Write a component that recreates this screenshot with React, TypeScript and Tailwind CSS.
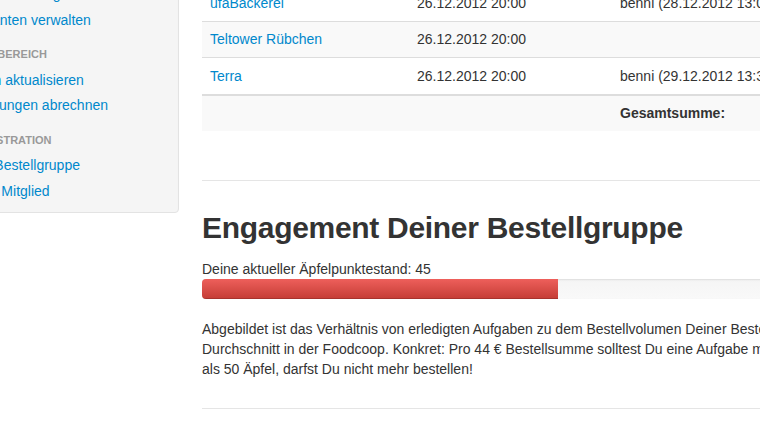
import React from "react";

const font = { fontFamily: "'Liberation Sans', Arial, Helvetica, sans-serif" };

function NavItem({ children }: { children: React.ReactNode }) {
  return (
    <li className="h-[25.5px] leading-[25.5px] whitespace-nowrap text-[14px] text-[#0088cc]">
      {children}
    </li>
  );
}

function NavHeader({ children }: { children: React.ReactNode }) {
  return (
    <li className="mt-[9px] h-[25.5px] leading-[25.5px] whitespace-nowrap text-[11px] font-bold uppercase text-[#999999]">
      {children}
    </li>
  );
}

export default function App() {
  return (
    <div
      className="w-[760px] h-[428px] overflow-hidden bg-white text-[#333333]"
      style={font}
    >
      <div className="flex items-start mt-[-28px]">
        {/* Sidebar well */}
        <div className="shrink-0 w-[260px] ml-[-81px] bg-[#f5f5f5] border border-[#e3e3e3] rounded-[4px] shadow-[inset_0_1px_1px_rgba(0,0,0,0.05)] pt-[9px] pb-[8px] pl-[37px]">
          <ul className="flex flex-col">
            <NavItem>Lagerverwaltung</NavItem>
            <NavItem>Lieferanten verwalten</NavItem>
            <NavHeader>Finanzbereich</NavHeader>
            <NavItem>Konten aktualisieren</NavItem>
            <NavItem>Bestellungen abrechnen</NavItem>
            <NavHeader>Administration</NavHeader>
            <NavItem>Neue Bestellgruppe</NavItem>
            <NavItem>Neues Mitglied</NavItem>
          </ul>
        </div>

        {/* Main content */}
        <div className="shrink-0 w-[720px] ml-[23px] mt-[13px] text-[14px]">
          {/* Table */}
          <div className="flex flex-col">
            <div className="flex h-[36px] border-t border-[#dddddd] bg-white items-center">
              <div className="w-[207px] pl-2 text-[#0088cc] whitespace-nowrap">ufaBäckerei</div>
              <div className="w-[203px] pl-2 whitespace-nowrap">26.12.2012 20:00</div>
              <div className="pl-2 whitespace-nowrap">benni (28.12.2012 13:05)</div>
            </div>
            <div className="flex h-[36px] border-t border-[#dddddd] bg-[#f9f9f9] items-center">
              <div className="w-[207px] pl-2 text-[#0088cc] whitespace-nowrap">Teltower Rübchen</div>
              <div className="w-[203px] pl-2 whitespace-nowrap">26.12.2012 20:00</div>
              <div className="pl-2 whitespace-nowrap"></div>
            </div>
            <div className="flex h-[37px] border-t border-[#dddddd] bg-white items-center">
              <div className="w-[207px] pl-2 text-[#0088cc] whitespace-nowrap">Terra</div>
              <div className="w-[203px] pl-2 whitespace-nowrap">26.12.2012 20:00</div>
              <div className="pl-2 whitespace-nowrap">benni (29.12.2012 13:32)</div>
            </div>
            <div className="flex h-[37px] border-t-2 border-[#dddddd] bg-[#f9f9f9] items-center">
              <div className="w-[207px] pl-2"></div>
              <div className="w-[203px] pl-2"></div>
              <div className="pl-2 font-bold whitespace-nowrap">Gesamtsumme:</div>
            </div>
          </div>

          <hr className="mt-[49px] border-0 border-t border-[#e5e5e5] border-b border-b-white" />

          <h2 className="mt-[26px] h-[40px] leading-[40px] text-[30px] font-bold tracking-[-0.3px] text-[#333333] whitespace-nowrap">
            Engagement Deiner Bestellgruppe
          </h2>

          <div className="mt-[11px] leading-[20px] whitespace-nowrap">
            Deine aktueller Äpfelpunktestand: 45
          </div>
          <div className="h-[20px] rounded-[4px] overflow-hidden bg-gradient-to-b from-[#f5f5f5] to-[#f9f9f9] shadow-[inset_0_1px_2px_rgba(0,0,0,0.1)]">
            <div className="h-full w-[356px] bg-gradient-to-b from-[#ee5f5b] to-[#c43c35] shadow-[inset_0_-1px_0_rgba(0,0,0,0.15)]" />
          </div>

          <p className="mt-[20px] leading-[20px] whitespace-nowrap">
            Abgebildet ist das Verhältnis von erledigten Aufgaben zu dem Bestellvolumen Deiner Bestellgruppe im
            <br />
            Durchschnitt in der Foodcoop. Konkret: Pro 44 € Bestellsumme solltest Du eine Aufgabe machen! Hast Du weniger
            <br />
            als 50 Äpfel, darfst Du nicht mehr bestellen!
          </p>

          <hr className="mt-[29px] border-0 border-t border-[#e5e5e5] border-b border-b-white" />
        </div>
      </div>
    </div>
  );
}
